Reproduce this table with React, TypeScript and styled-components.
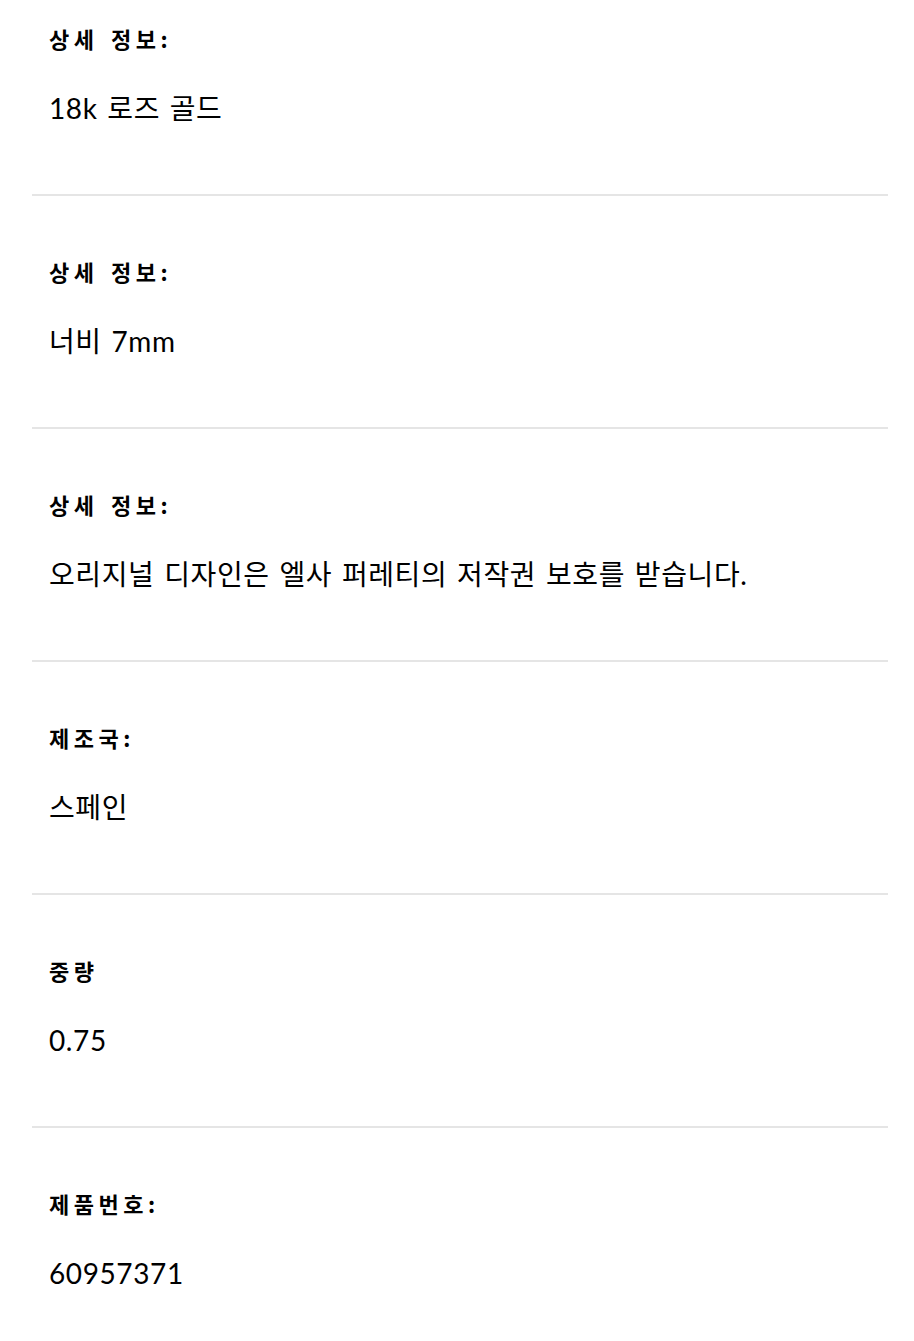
import React from "react";
import styled, { createGlobalStyle } from "styled-components";

const GlobalStyle = createGlobalStyle`
  html, body {
    margin: 0;
    padding: 0;
    background: #ffffff;
  }
  body {
    font-family: "Lato", "Noto Sans CJK KR", sans-serif;
    color: #000000;
  }
`;

const List = styled.dl`
  margin: 0;
  padding: 0 26px 0 32px;
  display: flex;
  flex-direction: column;
`;

const Row = styled.div<{ $first?: boolean; $last?: boolean }>`
  display: flex;
  flex-direction: column;
  gap: 37px;
  padding: ${(p) => (p.$first ? "23px" : "60px")} 17px ${(p) => (p.$last ? "30px" : "68px")};
  border-bottom: ${(p) => (p.$last ? "none" : "2px solid #e5e5e5")};
`;

const Label = styled.dt`
  margin: 0;
  font-family: "Noto Sans CJK KR", "Lato", sans-serif;
  font-size: 22px;
  font-weight: 700;
  line-height: 30px;
  letter-spacing: 4.5px;
  word-spacing: 3px;
`;

const Value = styled.dd`
  margin: 0;
  font-size: 28px;
  font-weight: 400;
  line-height: 36px;
  letter-spacing: 0.6px;
  word-spacing: 2px;
`;

const items = [
  { label: "상세 정보:", value: "18k 로즈 골드" },
  { label: "상세 정보:", value: "너비 7mm" },
  { label: "상세 정보:", value: "오리지널 디자인은 엘사 퍼레티의 저작권 보호를 받습니다." },
  { label: "제조국:", value: "스페인" },
  { label: "중량", value: "0.75" },
  { label: "제품번호:", value: "60957371" },
];

export default function App() {
  return (
    <>
      <GlobalStyle />
      <List>
        {items.map((it, i) => (
          <Row key={i} $first={i === 0} $last={i === items.length - 1}>
            <Label>{it.label}</Label>
            <Value>{it.value}</Value>
          </Row>
        ))}
      </List>
    </>
  );
}
